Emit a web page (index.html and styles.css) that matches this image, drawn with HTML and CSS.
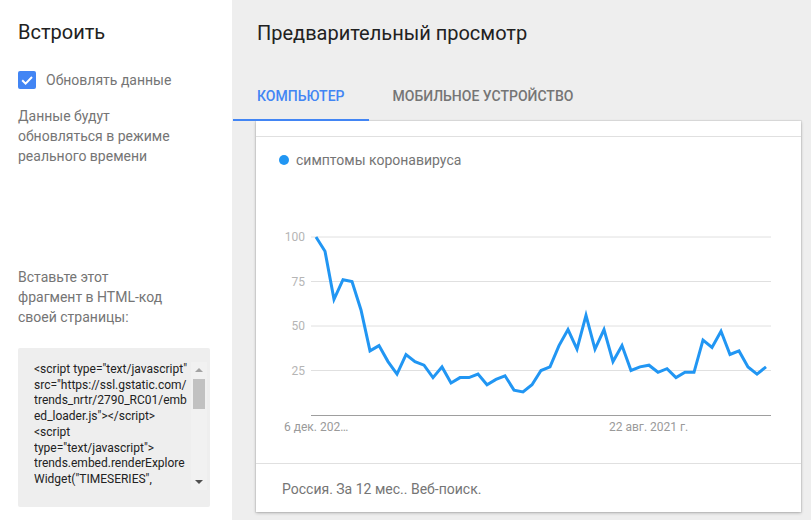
FILE: index.html
```html
<!DOCTYPE html>
<html lang="ru">
<head>
<meta charset="utf-8">
<title>Встроить</title>
<link rel="stylesheet" href="styles.css">
</head>
<body>
<div class="page">
  <aside class="sidebar">
    <h2 class="side-title">Встроить</h2>
    <label class="check-row">
      <svg class="checkbox" width="18" height="18" viewBox="0 0 18 18"><rect width="18" height="18" rx="2" fill="#4285f4"/><path d="M4.2 9.2 L7.6 12.6 L14 6" fill="none" stroke="#fff" stroke-width="2"/></svg>
      <span class="check-label">Обновлять данные</span>
    </label>
    <p class="note note-live">Данные будут обновляться в режиме реального времени</p>
    <p class="note note-paste">Вставьте этот фрагмент в HTML-код своей страницы:</p>
    <div class="code-box">
      <div class="code-text">
        <div class="code-line">&lt;script type="text/javascript"</div>
        <div class="code-line">src="https://ssl.gstatic.com/</div>
        <div class="code-line">trends_nrtr/2790_RC01/emb</div>
        <div class="code-line">ed_loader.js"&gt;&lt;/script&gt;</div>
        <div class="code-line">&lt;script</div>
        <div class="code-line">type="text/javascript"&gt;</div>
        <div class="code-line">trends.embed.renderExplore</div>
        <div class="code-line">Widget("TIMESERIES",</div>
      </div>
      <div class="scrollbar">
        <div class="sb-btn"><span class="tri tri-up"></span></div>
        <div class="sb-thumb"></div>
        <div class="sb-space"></div>
        <div class="sb-btn"><span class="tri tri-down"></span></div>
      </div>
    </div>
  </aside>
  <main class="main">
    <h2 class="main-title">Предварительный просмотр</h2>
    <nav class="tabs">
      <div class="tab tab-active">Компьютер</div>
      <div class="tab">Мобильное устройство</div>
    </nav>
    <section class="card">
      <div class="card-top"></div>
      <div class="card-body">
        <div class="legend"><span class="legend-dot"></span><span class="legend-text">симптомы коронавируса</span></div>
        <svg class="chart" width="545" height="293" viewBox="0 0 545 293">
          <g class="grid">
            <line x1="55" y1="67" x2="515" y2="67"/>
            <line x1="55" y1="111.5" x2="515" y2="111.5"/>
            <line x1="55" y1="156" x2="515" y2="156"/>
            <line x1="55" y1="200.5" x2="515" y2="200.5"/>
          </g>
          <line class="baseline" x1="55" y1="245.5" x2="515" y2="245.5"/>
          <g class="ylabels">
            <text x="49" y="71">100</text>
            <text x="49" y="115.5">75</text>
            <text x="49" y="160">50</text>
            <text x="49" y="204.5">25</text>
          </g>
          <g class="xlabels">
            <text x="28" y="261">6 дек. 202…</text>
            <text x="353" y="261">22 авг. 2021 г.</text>
          </g>
          <polyline class="series" points="60,67 69,81.2 78,129.3 87,109.7 96,111.5 105,140 114,180.9 123,175.6 132,191.6 141,204.1 150,184.5 159,191.6 168,195.2 177,207.6 186,196.9 195,213 204,207.6 213,207.6 222,204.1 231,214.7 240,209.4 249,205.8 258,220.1 267,221.9 276,214.7 285,200.5 294,196.9 303,175.6 312,159.6 321,179.1 330,145.3 339,179.1 348,159.6 357,191.6 366,175.6 375,200.5 384,196.9 393,195.2 402,202.3 411,198.7 420,207.6 429,202.3 438,202.3 447,170.2 456,177.4 465,161.3 474,184.5 483,180.9 492,196.9 501,204.1 510,196.9"/>
        </svg>
      </div>
      <div class="card-footer">Россия. За 12 мес.. Веб-поиск.</div>
    </section>
  </main>
</div>
</body>
</html>
```

FILE: styles.css
```css
* { box-sizing: border-box; }
html, body { margin: 0; padding: 0; }
body {
  font-family: Roboto, "Liberation Sans", Arial, sans-serif;
  width: 811px;
  height: 520px;
  overflow: hidden;
  background: #eeeeee;
}
.page {
  display: flex;
  height: 520px;
}
.sidebar {
  width: 232px;
  flex: none;
  background: #ffffff;
  padding: 20px 0 0 18px;
}
.side-title {
  margin: 0;
  font-size: 20px;
  line-height: 24px;
  font-weight: 400;
  color: #212121;
}
.check-row {
  display: flex;
  align-items: center;
  gap: 10px;
  margin-top: 27px;
  height: 18px;
}
.checkbox { display: block; flex: none; }
.check-label {
  font-size: 14px;
  color: #757575;
  line-height: 18px;
}
.note {
  margin: 0;
  font-size: 14px;
  line-height: 20px;
  color: #757575;
}
.note-live { margin-top: 17px; width: 165px; }
.note-paste { margin-top: 101px; width: 148px; }
.code-box {
  margin-top: 21px;
  width: 192px;
  height: 159px;
  background: #eeeeee;
  border-radius: 2px;
  display: flex;
  padding: 14px 3px 17px 16px;
}
.code-text {
  flex: 1;
  overflow: hidden;
  font-family: Roboto, "Liberation Sans", Arial, sans-serif;
  font-size: 12px;
  line-height: 15.7px;
  color: #222222;
  white-space: nowrap;
}
.scrollbar {
  width: 16px;
  flex: none;
  background: #f1f1f1;
  display: flex;
  flex-direction: column;
}
.sb-btn {
  height: 16px;
  display: flex;
  align-items: center;
  justify-content: center;
}
.tri {
  width: 0;
  height: 0;
  border-left: 4px solid transparent;
  border-right: 4px solid transparent;
}
.tri-up { border-bottom: 4px solid #a3a3a3; }
.tri-down { border-top: 4px solid #505050; }
.sb-thumb {
  height: 30px;
  margin: 1px 2px 0 2px;
  background: #c1c1c1;
}
.sb-space { flex: 1; }
.main {
  flex: 1;
  background: #eeeeee;
  padding-top: 21px;
}
.main-title {
  margin: 0 0 0 25px;
  font-size: 20px;
  line-height: 24px;
  font-weight: 400;
  color: #212121;
}
.tabs {
  display: flex;
  margin-top: 28px;
  padding-left: 1px;
  height: 48px;
}
.tab {
  padding: 0 24px;
  height: 48px;
  line-height: 46px;
  font-size: 14px;
  font-weight: 500;
  text-transform: uppercase;
  color: #757575;
  border-bottom: 2px solid transparent;
}
.tab-active {
  color: #4285f4;
  border-bottom-color: #4285f4;
}
.card {
  margin-left: 24px;
  width: 545px;
  background: #ffffff;
  box-shadow: 0 1px 3px rgba(0, 0, 0, 0.25), 0 0 0 1px rgba(0, 0, 0, 0.05);
}
.card-top {
  height: 16px;
  border-bottom: 1px solid #e0e0e0;
}
.card-body {
  border-bottom: 1px solid #e0e0e0;
}
.legend {
  display: flex;
  align-items: center;
  gap: 7px;
  padding: 13px 0 0 23px;
  height: 33px;
}
.legend-dot {
  width: 10px;
  height: 10px;
  border-radius: 50%;
  background: #2196f3;
}
.legend-text {
  font-size: 14px;
  line-height: 20px;
  color: #757575;
}
.chart { display: block; }
.grid line { stroke: #e0e0e0; stroke-width: 1; }
.baseline { stroke: #9e9e9e; stroke-width: 1; }
.ylabels text {
  font-family: Roboto, "Liberation Sans", Arial, sans-serif;
  font-size: 12px;
  fill: #b5b5b5;
  text-anchor: end;
}
.xlabels text {
  font-family: Roboto, "Liberation Sans", Arial, sans-serif;
  font-size: 12px;
  fill: #9a9a9a;
}
.series {
  fill: none;
  stroke: #2196f3;
  stroke-width: 3;
}
.card-footer {
  height: 48px;
  padding-left: 26px;
  line-height: 50px;
  font-size: 14px;
  color: #757575;
}
```
